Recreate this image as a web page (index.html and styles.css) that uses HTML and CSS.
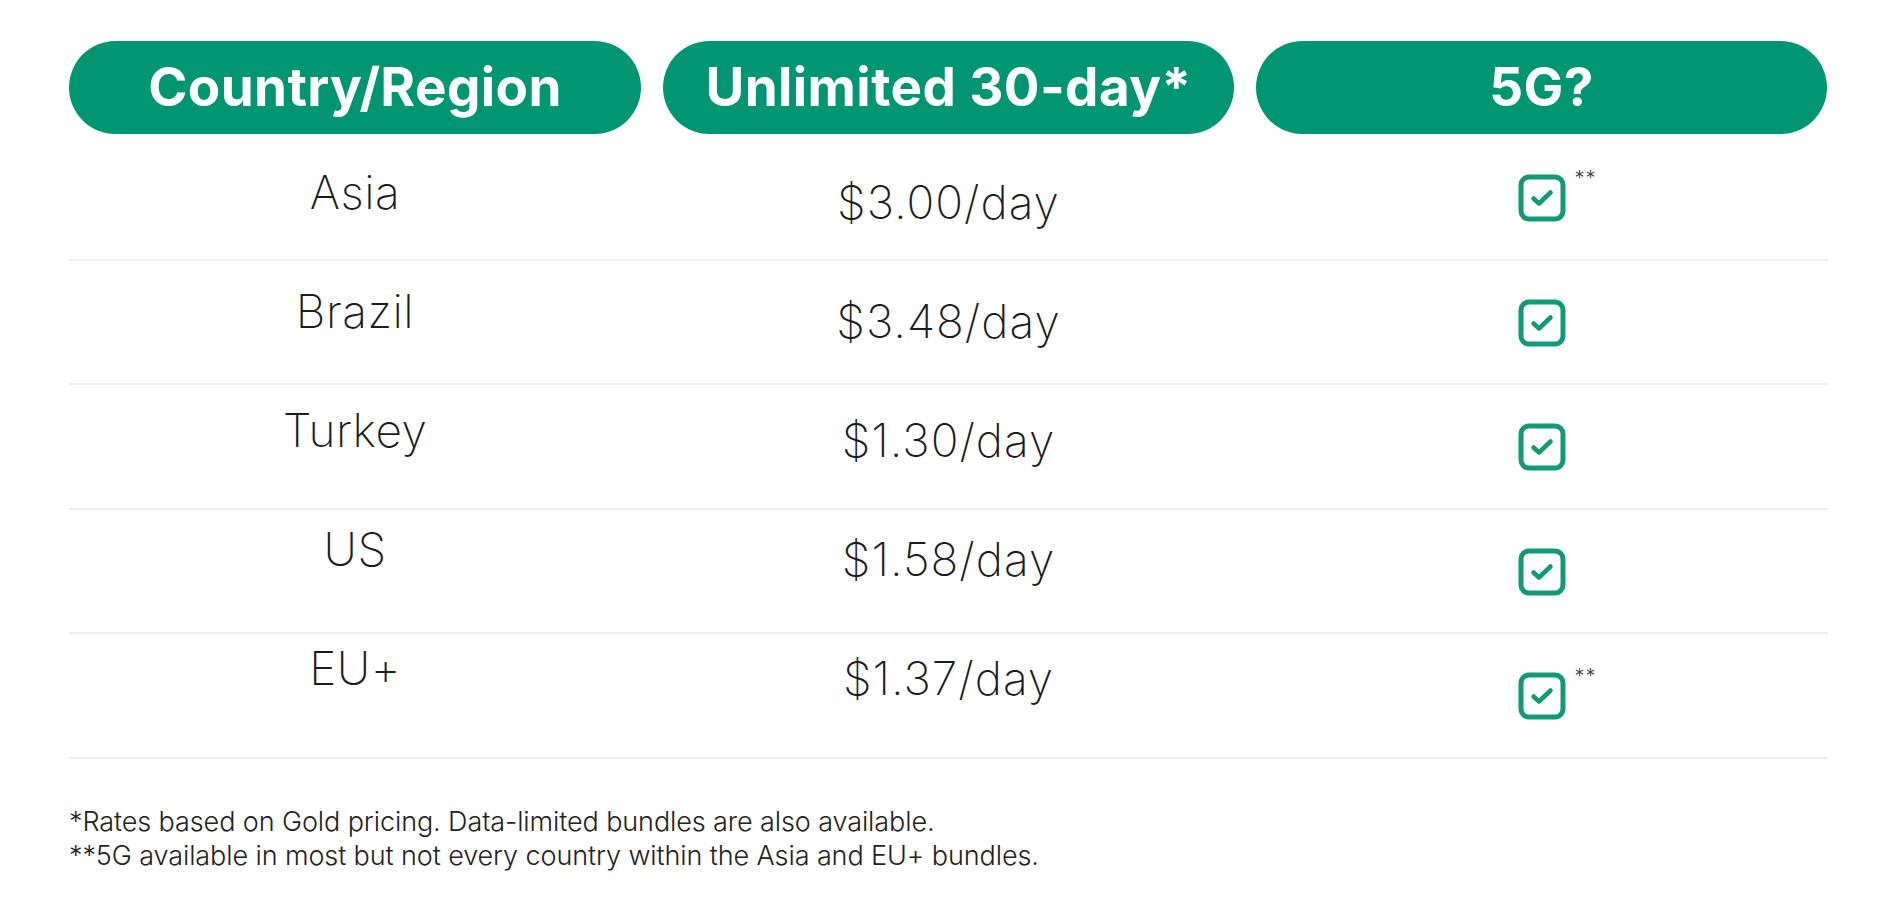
FILE: index.html
```html
<!DOCTYPE html>
<html lang="en">
<head>
<meta charset="utf-8">
<title>Rates</title>
<link rel="stylesheet" href="styles.css">
</head>
<body>
<div class="wrap">
  <div class="table">
    <div class="head">
      <div class="pill">Country/Region</div>
      <div class="pill">Unlimited 30-day*</div>
      <div class="pill">5G?</div>
    </div>

    <div class="tbody">
      <div class="col col-country">
        <div class="cell">Asia</div>
        <div class="cell">Brazil</div>
        <div class="cell">Turkey</div>
        <div class="cell">US</div>
        <div class="cell">EU+</div>
      </div>

      <div class="col col-price">
        <div class="cell">$3.00/day</div>
        <div class="cell">$3.48/day</div>
        <div class="cell">$1.30/day</div>
        <div class="cell">$1.58/day</div>
        <div class="cell">$1.37/day</div>
      </div>

      <div class="col col-check">
        <div class="cell"><span class="box"><svg width="48" height="48" viewBox="0 0 48 48"><rect x="3" y="3" width="42" height="42" rx="8" fill="none" stroke="#119a75" stroke-width="5"/><path d="M15.5 24.5 L21 29.5 L32.5 18.5" fill="none" stroke="#119a75" stroke-width="4.5" stroke-linecap="round" stroke-linejoin="round"/></svg><span class="star">**</span></span></div>
        <div class="cell"><span class="box"><svg width="48" height="48" viewBox="0 0 48 48"><rect x="3" y="3" width="42" height="42" rx="8" fill="none" stroke="#119a75" stroke-width="5"/><path d="M15.5 24.5 L21 29.5 L32.5 18.5" fill="none" stroke="#119a75" stroke-width="4.5" stroke-linecap="round" stroke-linejoin="round"/></svg></span></div>
        <div class="cell"><span class="box"><svg width="48" height="48" viewBox="0 0 48 48"><rect x="3" y="3" width="42" height="42" rx="8" fill="none" stroke="#119a75" stroke-width="5"/><path d="M15.5 24.5 L21 29.5 L32.5 18.5" fill="none" stroke="#119a75" stroke-width="4.5" stroke-linecap="round" stroke-linejoin="round"/></svg></span></div>
        <div class="cell"><span class="box"><svg width="48" height="48" viewBox="0 0 48 48"><rect x="3" y="3" width="42" height="42" rx="8" fill="none" stroke="#119a75" stroke-width="5"/><path d="M15.5 24.5 L21 29.5 L32.5 18.5" fill="none" stroke="#119a75" stroke-width="4.5" stroke-linecap="round" stroke-linejoin="round"/></svg></span></div>
        <div class="cell"><span class="box"><svg width="48" height="48" viewBox="0 0 48 48"><rect x="3" y="3" width="42" height="42" rx="8" fill="none" stroke="#119a75" stroke-width="5"/><path d="M15.5 24.5 L21 29.5 L32.5 18.5" fill="none" stroke="#119a75" stroke-width="4.5" stroke-linecap="round" stroke-linejoin="round"/></svg><span class="star">**</span></span></div>
      </div>
    </div>
  </div>

  <div class="notes">
    <p>*Rates based on Gold pricing. Data-limited bundles are also available.</p>
    <p>**5G available in most but not every country within the Asia and EU+ bundles.</p>
  </div>
</div>
</body>
</html>
```

FILE: styles.css
```css
* { box-sizing: border-box; }

html, body {
  margin: 0;
  padding: 0;
  background: #ffffff;
}

body {
  font-family: Inter, "Noto Sans", "Liberation Sans", sans-serif;
  color: #1c1c1c;
}

.wrap {
  padding: 41px 0 0 69px;
  width: 1828px;
}

.table {
  width: 1759px;
}

.head {
  display: grid;
  grid-template-columns: 572px 571px 571px;
  column-gap: 22px;
}

.pill {
  height: 93px;
  border-radius: 47px;
  background: #009671;
  color: #ffffff;
  font-weight: 700;
  font-size: 53px;
  letter-spacing: 0.4px;
  display: flex;
  align-items: center;
  justify-content: center;
  padding-bottom: 2px;
}

.tbody {
  margin-top: 2px;
  height: 625px;
  display: grid;
  grid-template-columns: 572px 571px 571px;
  column-gap: 22px;
  align-items: start;
  background: repeating-linear-gradient(to bottom,
    transparent 0, transparent 122.5px,
    #eeeeee 122.5px, #eeeeee 124.5px);
}

.col {
  display: flex;
  flex-direction: column;
}

.cell {
  display: flex;
  justify-content: center;
  align-items: center;
  font-weight: 200;
  font-size: 46px;
}

.col-country { margin-top: -4px; }
.col-country .cell { height: 119px; letter-spacing: 0.5px; }

.col-price { margin-top: 6px; }
.col-price .cell { height: 119px; letter-spacing: 1px; }

.col-check .cell { height: 124.5px; }

.box {
  position: relative;
  display: block;
  width: 48px;
  height: 48px;
}

.box svg {
  display: block;
}

.star {
  position: absolute;
  left: 57px;
  top: -8px;
  font-size: 20px;
  font-weight: 300;
  color: #444;
  letter-spacing: 1px;
}

.notes {
  padding-top: 44px;
}

.notes p {
  margin: 0;
  font-size: 27px;
  line-height: 34px;
  font-weight: 300;
  color: #222;
  letter-spacing: -0.1px;
}
```
